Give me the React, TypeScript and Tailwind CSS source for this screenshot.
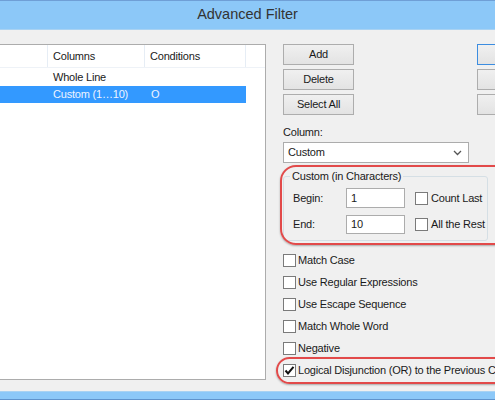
import React from 'react'

const FONT = { fontFamily: '"Liberation Sans", Arial, sans-serif' }

function WinButton({ label, focused }: { label?: string; focused?: boolean }) {
  return (
    <div
      className={`w-[71px] h-[21px] flex items-center justify-center text-[#1a1a1a] bg-gradient-to-b from-[#f0f0f0] to-[#e3e3e3] border ${
        focused ? 'border-[#3c8de0]' : 'border-[#adadad]'
      }`}
    >
      {label}
    </div>
  )
}

function CheckBox({ checked }: { checked?: boolean }) {
  return (
    <div className="w-[13px] h-[13px] shrink-0 bg-white border border-[#7a7a7a] flex items-center justify-center">
      {checked && (
        <svg width="11" height="11" viewBox="0 0 11 11">
          <path d="M1.5 5.5 L4 8.5 L9.5 1.8" fill="none" stroke="#111" strokeWidth="2" />
        </svg>
      )}
    </div>
  )
}

const OPTIONS = [
  { label: 'Match Case' },
  { label: 'Use Regular Expressions' },
  { label: 'Use Escape Sequence' },
  { label: 'Match Whole Word' },
  { label: 'Negative' },
  { label: 'Logical Disjunction (OR) to the Previous Condition', checked: true },
]

export default function App() {
  return (
    <div
      className="relative w-[495px] h-[400px] overflow-hidden bg-[#f0f0f0] flex flex-col text-[#1a1a1a] text-[11px] tracking-[-0.2px]"
      style={FONT}
    >
      {/* Title bar */}
      <div className="h-[30px] shrink-0 bg-[#8cc8f8] border-t border-t-[#6f9fd6] border-b border-b-[#a9d2f2] flex items-center justify-center text-[14.5px] tracking-normal text-[#333]">
        Advanced Filter
      </div>

      {/* Body */}
      <div className="flex-1 flex pt-[14px]">
        {/* Filter list */}
        <div className="w-[266px] h-[336px] shrink-0 bg-white border border-[#acacac] border-l-0">
          <div className="h-[23px] flex border-b border-[#eef2f7]">
            <div className="w-[48px] border-r border-[#e6edf5]" />
            <div className="w-[97px] pl-[5px] flex items-center border-r border-[#e6edf5]">Columns</div>
            <div className="w-[101px] pl-[5px] flex items-center border-r border-[#e6edf5]">Conditions</div>
          </div>
          <div className="h-[18px] flex items-center">
            <div className="w-[48px]" />
            <div className="pl-[5px]">Whole Line</div>
          </div>
          <div className="h-[17px] w-[246px] flex items-center bg-[#3399ff] text-[#eef4ff]">
            <div className="w-[48px]" />
            <div className="w-[97px] pl-[5px]">Custom (1…10)</div>
            <div className="pl-[6px]">O</div>
          </div>
        </div>

        {/* Middle column */}
        <div className="ml-[17px] w-[186px] shrink-0">
          <div className="flex flex-col gap-[4px]">
            <WinButton label="Add" />
            <WinButton label="Delete" />
            <WinButton label="Select All" />
          </div>
          <div className="mt-[10px] h-[15px] leading-[15px]">Column:</div>
          <div className="mt-[2px] h-[21px] bg-white border border-[#acacac] flex items-center justify-between pl-[4px] pr-[6px]">
            <span>Custom</span>
            <svg width="9" height="6" viewBox="0 0 9 6">
              <path d="M1 1 L4.5 4.5 L8 1" fill="none" stroke="#555" strokeWidth="1.3" />
            </svg>
          </div>

          <fieldset className="mt-[6px] w-[205px] h-[72px] border border-[#d5dfe5] rounded-[3px] pl-[9px]">
            <legend className="ml-[-3px] px-[2px] leading-[15px]">Custom (in Characters)</legend>
            <div className="mt-[4px] flex items-center h-[20px]">
              <span className="w-[53px]">Begin:</span>
              <div className="w-[59px] h-[20px] bg-white border border-[#acacac] flex items-center pl-[4px]">1</div>
              <div className="ml-[10px] flex items-center gap-[3px]">
                <CheckBox />
                <span className="whitespace-nowrap">Count Last</span>
              </div>
            </div>
            <div className="mt-[7px] flex items-center h-[19px]">
              <span className="w-[53px]">End:</span>
              <div className="w-[59px] h-[19px] bg-white border border-[#acacac] flex items-center pl-[4px]">10</div>
              <div className="ml-[10px] flex items-center gap-[3px]">
                <CheckBox />
                <span className="whitespace-nowrap">All the Rest</span>
              </div>
            </div>
          </fieldset>

          <div className="mt-[8px] flex flex-col">
            {OPTIONS.map((o) => (
              <div key={o.label} className="h-[22px] flex items-center gap-[2px] whitespace-nowrap">
                <CheckBox checked={o.checked} />
                <span>{o.label}</span>
              </div>
            ))}
          </div>
        </div>

        {/* Right column (clipped) */}
        <div className="ml-[8px] shrink-0 flex flex-col gap-[4px]">
          <WinButton focused />
          <WinButton />
          <WinButton />
        </div>
      </div>

      {/* Bottom frame */}
      <div className="h-[9px] shrink-0 bg-[#8cc8f8] border-t border-t-[#a9d2f2] border-b border-b-[#5f93cc]" />

      {/* Red annotation rings */}
      <div className="absolute left-[280px] top-[165px] w-[240px] h-[80px] rounded-[16px] border-2 border-[#e24a4a] shadow-[0_1px_2px_rgba(0,0,0,0.3)] pointer-events-none" />
      <div className="absolute left-[276px] top-[357px] w-[260px] h-[27px] rounded-full border-2 border-[#e24a4a] shadow-[0_1px_2px_rgba(0,0,0,0.3)] pointer-events-none" />
    </div>
  )
}
